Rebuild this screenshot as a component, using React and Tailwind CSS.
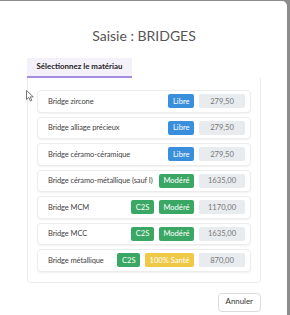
import React from 'react';

const rows = [
  { name: 'Bridge zircone', tags: [{ label: 'Libre', tone: 'blue' }], price: '279,50' },
  { name: 'Bridge alliage précieux', tags: [{ label: 'Libre', tone: 'blue' }], price: '279,50' },
  { name: 'Bridge céramo-céramique', tags: [{ label: 'Libre', tone: 'blue' }], price: '279,50' },
  { name: 'Bridge céramo-métallique (sauf I)', tags: [{ label: 'Modéré', tone: 'green' }], price: '1635,00' },
  { name: 'Bridge MCM', tags: [{ label: 'C2S', tone: 'green' }, { label: 'Modéré', tone: 'green' }], price: '1170,00' },
  { name: 'Bridge MCC', tags: [{ label: 'C2S', tone: 'green' }, { label: 'Modéré', tone: 'green' }], price: '1635,00' },
  { name: 'Bridge métallique', tags: [{ label: 'C2S', tone: 'green' }, { label: '100% Santé', tone: 'yellow' }], price: '870,00' },
];

const toneClass = {
  blue: 'bg-[#3a8fdc]',
  green: 'bg-[#3aa864]',
  yellow: 'bg-[#efc945]',
};

function Tag({ label, tone }) {
  return (
    <span className={`h-[14px] px-[4.5px] flex items-center rounded-[2px] text-white text-[7.6px] ${toneClass[tone]}`}>
      {label}
    </span>
  );
}

function Row({ row }) {
  return (
    <div className="h-[22.5px] flex items-center pl-[10px] pr-[5px] rounded-[4px] border border-[#ececec] shadow-[0_1px_2px_rgba(0,0,0,0.06)] bg-white">
      <span className="flex-1 min-w-0 text-[7.5px] tracking-[-0.1px] text-[#444] whitespace-nowrap">{row.name}</span>
      <div className="flex shrink-0 items-center gap-[5px]">
        {row.tags.map((t, i) => (
          <Tag key={i} {...t} />
        ))}
        <span className="w-[46px] h-[14px] flex items-center justify-center rounded-[2px] bg-[#e9ecef] text-[#777] text-[7.6px]">
          {row.price}
        </span>
      </div>
    </div>
  );
}

export default function App() {
  return (
    <div className="w-[290px] h-[315px] bg-[#8c8c8c] pt-px pr-[3px] relative" style={{ fontFamily: 'Lato, "Open Sans", sans-serif' }}>
      <div className="h-full bg-white rounded-tr-[5px] flex flex-col pl-[27px] pr-[26px]">
        <h1 className="pt-[26px] text-center text-[14px] leading-[18px] text-[#555]">Saisie : BRIDGES</h1>
        <div className="mt-[13px] flex">
          <div className="h-[20px] px-[9.5px] flex items-center bg-[#f4f1fb] border-b-2 border-[#a58ee0] text-[7.9px] font-bold text-[#222]">
            Sélectionnez le matériau
          </div>
        </div>
        <div className="border border-t-0 border-[#ebebeb] rounded-b-[4px] pt-[12px] pb-[10px] pl-[9px] pr-[9px] flex flex-col gap-[4px]">
          {rows.map((r, i) => (
            <Row key={i} row={r} />
          ))}
        </div>
        <div className="mt-[10px] flex justify-end">
          <button className="h-[19px] px-[7px] rounded-[4px] border border-[#dcdcdc] text-[7.9px] text-[#333] bg-white">Annuler</button>
        </div>
      </div>
      <svg className="absolute left-[26px] top-[90px]" width="8" height="12" viewBox="0 0 8 12">
        <path d="M0.5 0.5 L0.5 9.5 L2.8 7.4 L4.4 11 L5.8 10.4 L4.3 6.9 L7.3 6.9 Z" fill="white" stroke="#555" strokeWidth="0.8" />
      </svg>
    </div>
  );
}
